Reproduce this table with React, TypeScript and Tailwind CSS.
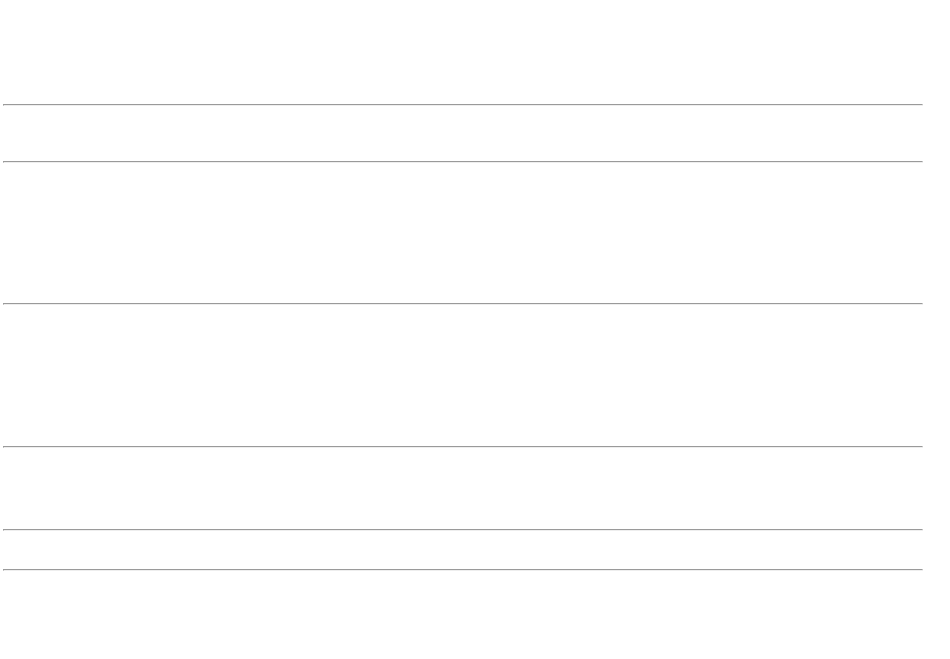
import React from "react";

const Rule: React.FC = () => (
  <div className="h-[2px] w-full border border-t-[#9a9a9a] border-l-[#9a9a9a] border-b-[#eeeeee] border-r-[#eeeeee]" />
);

const App: React.FC = () => {
  return (
    <div className="min-h-[659px] bg-white pt-[104px] pl-[3px]">
      <div className="flex w-[920px] flex-col">
        <Rule />
        <div className="h-[55px]" />
        <Rule />
        <div className="h-[140px]" />
        <Rule />
        <div className="h-[141px]" />
        <Rule />
        <div className="h-[81px]" />
        <Rule />
        <div className="h-[38px]" />
        <Rule />
      </div>
    </div>
  );
};

export default App;
